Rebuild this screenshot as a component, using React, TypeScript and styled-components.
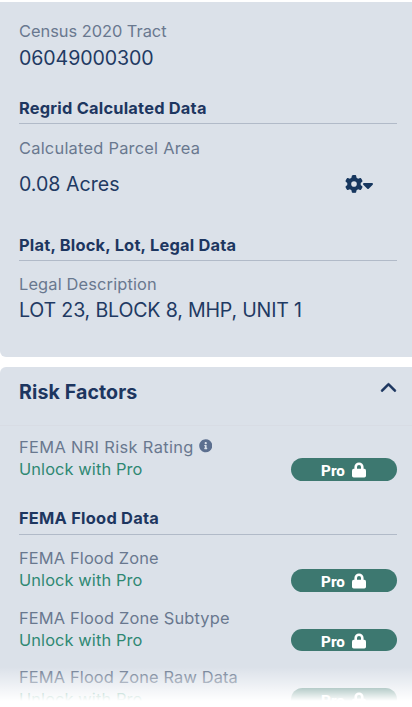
import React from 'react';
import styled, { createGlobalStyle } from 'styled-components';
import { FaCaretDown, FaChevronUp, FaGear } from 'react-icons/fa6';
import { FaInfoCircle } from 'react-icons/fa';

const GlobalStyle = createGlobalStyle`
  * { box-sizing: border-box; }
  body {
    margin: 0;
    background: #fff;
    font-family: Inter, 'Open Sans', sans-serif;
    overflow: hidden;
  }
`;

const Screen = styled.main`
  position: relative;
  width: 412px;
  height: 707px;
  padding-top: 2px;
  overflow: hidden;
  display: flex;
  flex-direction: column;
  gap: 10px;
`;

const Panel = styled.section<{ $open?: boolean }>`
  flex: none;
  padding: ${p => (p.$open ? '0 0 40px' : '18px 15px 33px 19px')};
  background: #dbe1e9;
  border-radius: ${p => (p.$open ? '6px 0 0 0' : '0 0 0 6px')};
`;

const PanelHeader = styled.header`
  display: flex;
  justify-content: space-between;
  height: 59px;
  padding: 11px 15px 0 19px;
  border-bottom: 1px solid #d8dce4;
  color: #1d3660;
`;

const PanelTitle = styled.h2<{ $track: number }>`
  margin: 0;
  font-size: 19.6px;
  line-height: 28px;
  font-weight: 650;
  letter-spacing: ${p => p.$track}px;
`;

const Chevron = styled(FaChevronUp)`
  width: 17px;
  height: 17px;
  margin-top: 2px;
  stroke: currentColor;
  stroke-width: 14px;
`;

const PanelBody = styled.div`
  padding: 10px 15px 0 19px;
`;

const Label = styled.div<{ $track: number; $top?: number }>`
  display: flex;
  align-items: center;
  margin-top: ${p => p.$top ?? 0}px;
  font-size: 16.4px;
  line-height: 22px;
  letter-spacing: ${p => p.$track}px;
  color: #69788f;
  white-space: nowrap;
`;

const Value = styled.div<{ $track: number; $top: number }>`
  display: flex;
  justify-content: space-between;
  margin-top: ${p => p.$top}px;
  font-size: 19.6px;
  line-height: 28px;
  letter-spacing: ${p => p.$track}px;
  color: #1f3a63;
  white-space: nowrap;
`;

const Heading = styled.h3<{ $track: number; $top: number; $gap?: number }>`
  margin: ${p => p.$top}px 0 0;
  padding-bottom: ${p => p.$gap ?? 4}px;
  border-bottom: 1px solid #b1bac8;
  font-size: 16.4px;
  line-height: 22px;
  font-weight: 650;
  letter-spacing: ${p => p.$track}px;
  color: #1d3660;
`;

const UnitMenu = styled.button`
  display: flex;
  align-items: center;
  margin: 0 24px 0 0;
  padding: 0;
  border: 0;
  background: none;
  color: #17375f;
`;

const Gear = styled(FaGear)`
  width: 18px;
  height: 18px;
`;

const Caret = styled(FaCaretDown)`
  width: 10px;
  height: 16px;
  margin-top: 2px;
`;

const Info = styled(FaInfoCircle)`
  width: 13.5px;
  height: 13.5px;
  margin: -2px 0 0 5px;
  color: #5c6f8f;
`;

const LockedRow = styled.div<{ $height: number; $top?: number }>`
  display: flex;
  justify-content: space-between;
  height: ${p => p.$height}px;
  margin-top: ${p => p.$top ?? 0}px;
`;

const Unlock = styled.div`
  font-size: 16.4px;
  line-height: 22px;
  letter-spacing: 0.1px;
  color: #2f8873;
`;

const ProButton = styled.button<{ $height?: number }>`
  display: flex;
  align-items: center;
  justify-content: center;
  gap: 7px;
  width: 106px;
  height: ${p => p.$height ?? 23}px;
  margin: 22px 0 0;
  padding: 3px 1px 0 0;
  border: 0;
  border-radius: 12px;
  background: #3d7870;
  color: #fff;
  font: 800 15.2px/20px Roboto, sans-serif;
`;

const LockIcon = styled.svg`
  width: 14px;
  height: 16px;
  margin-top: -2px;
  fill: none;
  stroke: currentColor;
  stroke-width: 2.6px;
`;

const Fade = styled.div`
  position: absolute;
  inset: auto 0 0;
  height: 40px;
  background: linear-gradient(rgba(255, 255, 255, 0), #fff 34px);
`;

function Lock() {
  return (
    <LockIcon viewBox="0 0 14 16" aria-hidden="true">
      <path d="M3.7 8V5a3.3 3.3 0 0 1 6.6 0v3" />
      <rect x="0" y="6.7" width="14" height="8.8" rx="1.7" fill="currentColor" stroke="none" />
    </LockIcon>
  );
}

interface LockedProps {
  label: string;
  track: number;
  height: number;
  top?: number;
  info?: boolean;
  pill?: number;
}

function LockedField({ label, track, height, top, info, pill }: LockedProps) {
  return (
    <LockedRow $height={height} $top={top}>
      <div>
        <Label $track={track}>
          {label}
          {info && <Info />}
        </Label>
        <Unlock>Unlock with Pro</Unlock>
      </div>
      <ProButton $height={pill}>
        Pro
        <Lock />
      </ProButton>
    </LockedRow>
  );
}

export default function App() {
  return (
    <Screen>
      <GlobalStyle />
      <Panel>
        <Label $track={-0.02}>Census 2020 Tract</Label>
        <Value $top={2} $track={-0.1}>06049000300</Value>
        <Heading $top={25} $track={0.22}>Regrid Calculated Data</Heading>
        <Label $top={13} $track={0.24}>Calculated Parcel Area</Label>
        <Value $top={11} $track={0}>
          0.08 Acres
          <UnitMenu aria-label="Change units">
            <Gear />
            <Caret />
          </UnitMenu>
        </Value>
        <Heading $top={36} $track={0.22}>Plat, Block, Lot, Legal Data</Heading>
        <Label $top={12} $track={0.15}>Legal Description</Label>
        <Value $top={1} $track={-0.18}>LOT 23, BLOCK 8, MHP, UNIT 1</Value>
      </Panel>
      <Panel $open>
        <PanelHeader>
          <PanelTitle $track={0.1}>Risk Factors</PanelTitle>
          <Chevron />
        </PanelHeader>
        <PanelBody>
          <LockedField label="FEMA NRI Risk Rating" track={0.35} height={46} info />
          <Heading $top={25} $gap={5} $track={0.25}>FEMA Flood Data</Heading>
          <LockedField label="FEMA Flood Zone" track={0.14} height={60} top={12} />
          <LockedField label="FEMA Flood Zone Subtype" track={0.16} height={59} pill={22} />
          <LockedField label="FEMA Flood Zone Raw Data" track={0.14} height={59} />
        </PanelBody>
      </Panel>
      <Fade />
    </Screen>
  );
}
